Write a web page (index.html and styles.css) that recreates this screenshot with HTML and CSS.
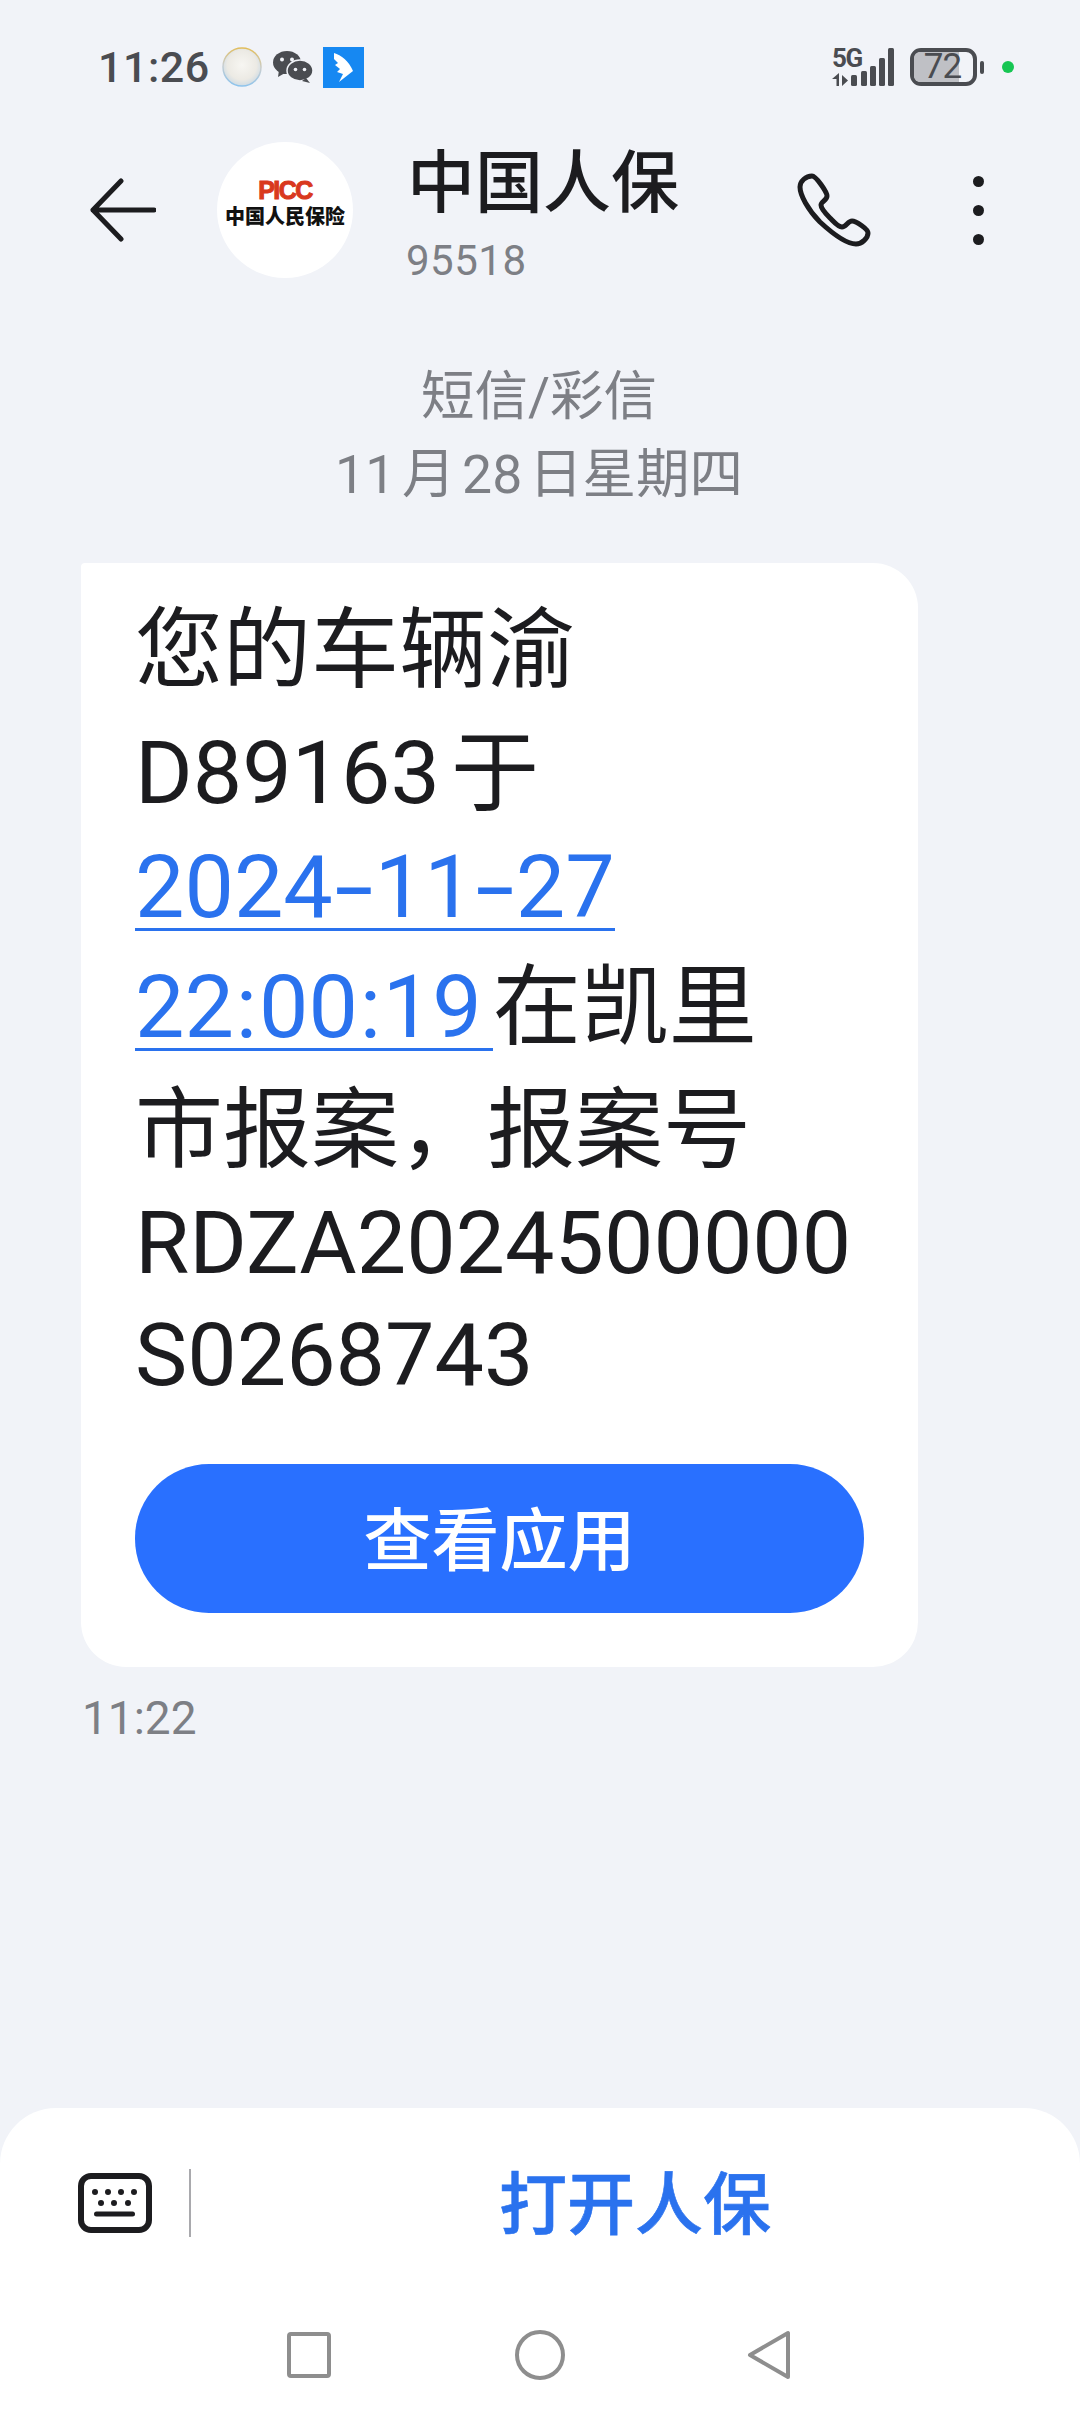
FILE: index.html
```html
<!DOCTYPE html>
<html lang="zh-CN">
<head>
<meta charset="utf-8">
<title>中国人保</title>
<link rel="stylesheet" href="styles.css">
</head>
<body>
<div class="screen">
  <div class="status">
    <span class="clock">11:26</span>
    <svg class="ic-weather" viewBox="0 0 42 42"><defs><radialGradient id="moon" cx="50%" cy="45%" r="55%"><stop offset="0" stop-color="#f7f6f2"/><stop offset=".7" stop-color="#eceae4"/><stop offset="1" stop-color="#cfdbe4"/></radialGradient><linearGradient id="rim" x1="0.6" y1="0" x2="0.5" y2="1"><stop offset="0" stop-color="#e2bd5a"/><stop offset=".5" stop-color="#c9ced0"/><stop offset="1" stop-color="#8dc3ec"/></linearGradient></defs><circle cx="21" cy="21" r="19" fill="url(#moon)" stroke="url(#rim)" stroke-width="1.5"/></svg>
    <svg class="ic-wechat" viewBox="0 0 40 32" fill="#4a4c51"><ellipse cx="14" cy="11.500" rx="14" ry="11.500"/><path d="M6 19l-1 7 7-4z"/><ellipse cx="27" cy="19.500" rx="13" ry="10.500" stroke="#f1f3f8" stroke-width="1.500"/><path d="M33 27l4 5-8-2z"/><circle cx="9" cy="8.500" r="2" fill="#f1f3f8"/><circle cx="19" cy="8.500" r="2" fill="#f1f3f8"/><circle cx="22.500" cy="18.500" r="1.800" fill="#f1f3f8"/><circle cx="31.500" cy="18.500" r="1.800" fill="#f1f3f8"/></svg>
    <svg class="ic-app" viewBox="0 0 41 41"><rect width="41" height="41" fill="#1688f2"/><path d="M11 6C18 8 26 14 30 24L16 35l4-8-6-2 3-3-5-4 3-2-4-4z" fill="#fff"/></svg>
    <span class="status-gap"></span>
    <svg class="ic-signal" viewBox="0 0 62 38" fill="#4a4c51"><rect x="19" y="27" width="6" height="11" rx="1.500"/><rect x="29" y="23" width="6" height="15" rx="1.500"/><rect x="38" y="18" width="6" height="20" rx="1.500"/><rect x="47" y="10" width="6" height="28" rx="1.500"/><rect x="56" y="0" width="6" height="38" rx="1.500"/><path d="M7 25v13H4.500v-7H0zM10 27l6 5.500-6 5.500z"/></svg>
    <span class="net">5G</span>
    <div class="battery"><div class="battery-fill"></div><span class="battery-num">72</span></div>
    <span class="battery-cap"></span>
    <span class="dot-green"></span>
  </div>

  <header class="header">
    <svg class="ic-back" viewBox="0 0 66 64" fill="none" stroke="#1c1c1f" stroke-width="5" stroke-linecap="round" stroke-linejoin="round"><path d="M31 3L3 32l28 29M3 32h61"/></svg>
    <div class="avatar">
      <span class="avatar-mark">PICC</span>
      <span class="avatar-name">中国人民保险</span>
    </div>
    <div class="contact">
      <div class="contact-name">中国人保</div>
      <div class="contact-num">95518</div>
    </div>
    <svg class="ic-phone" viewBox="0 0 74 74" fill="none" stroke="#1c1c1f" stroke-width="5" stroke-linejoin="round"><path d="M15 3c-6 0-12 5-12 11 0 8 8 23 20 35 13 12 26 22 36 22 6 0 12-6 12-11 0-4-12-12-16-12-4 0-6 6-10 6-4 0-8-5-12-9s-9-9-9-13c0-3 6-5 6-9S19 3 15 3z"/></svg>
    <div class="more"><span></span><span></span><span></span></div>
  </header>

  <main class="thread">
    <div class="thread-kind">短信/彩信</div>
    <div class="thread-date">11月28日星期四</div>
    <article class="bubble">
      <p class="msg">
        <span class="ln">您的车辆渝</span>
        <span class="ln">D89163于</span>
        <span class="ln"><a class="link">2024<span class="hy">-</span>11<span class="hy">-</span>27</a></span>
        <span class="ln"><a class="link">22<span class="cl">:</span>00<span class="cl">:</span>19</a>在凯里</span>
        <span class="ln">市报案，报案号</span>
        <span class="ln">RDZA2024500000</span>
        <span class="ln">S0268743</span>
      </p>
      <button class="cta">查看应用</button>
    </article>
    <div class="stamp">11:22</div>
  </main>

  <footer class="dock">
    <div class="dock-row">
      <svg class="ic-kbd" viewBox="0 0 74 60"><rect x="3" y="3" width="68" height="54" rx="10" fill="#fff" stroke="#1c1c1f" stroke-width="6"/><g fill="#1c1c1f"><circle cx="17" cy="19" r="3"/><circle cx="30" cy="19" r="3"/><circle cx="43" cy="19" r="3"/><circle cx="56" cy="19" r="3"/><circle cx="23" cy="30" r="3"/><circle cx="36" cy="30" r="3"/><circle cx="50" cy="30" r="3"/><rect x="16" y="38.500" width="41" height="5" rx="2.500"/></g></svg>
      <span class="dock-rule"></span>
      <span class="dock-open">打开人保</span>
    </div>
    <nav class="nav">
      <svg class="nav-sq" viewBox="0 0 44 46" fill="none" stroke="#8e8e8e" stroke-width="4"><rect x="2" y="2" width="40" height="42" rx="2"/></svg>
      <svg class="nav-ci" viewBox="0 0 50 50" fill="none" stroke="#8e8e8e" stroke-width="4"><circle cx="25" cy="25" r="23"/></svg>
      <svg class="nav-tr" viewBox="0 0 44 50" fill="none" stroke="#8e8e8e" stroke-width="4" stroke-linejoin="round"><path d="M41 3v44L3 25z"/></svg>
    </nav>
  </footer>
</div>
</body>
</html>
```
FILE: styles.css
```css
* { box-sizing: border-box; }
html, body { margin: 0; padding: 0; }
body { font-family: Roboto, "Noto Sans CJK SC", sans-serif; color: #1c1c1f; }

.screen {
  width: 1080px;
  height: 2412px;
  overflow: hidden;
  display: flex;
  flex-direction: column;
  background: #f1f3f8;
}

/* status bar */
.status {
  height: 134px;
  flex: none;
  display: flex;
  align-items: center;
  padding-left: 98px;
  position: relative;
}
.clock { font-size: 43px; font-weight: 500; color: #4a4c51; letter-spacing: .5px; width: 123px; }
.ic-weather { width: 42px; height: 42px; margin-right: 10px; }
.ic-wechat { width: 40px; height: 32px; margin-right: 10px; }
.ic-app { width: 41px; height: 41px; }
.status-gap { flex: 1; }
.ic-signal { width: 62px; height: 38px; margin-right: 16px; }
.net {
  position: absolute;
  left: 832px;
  top: 47px;
  font-size: 26px;
  line-height: 22px;
  font-weight: 700;
  color: #4a4c51;
  letter-spacing: -1.500px;
}
.battery {
  width: 67px;
  height: 38px;
  border: 4px solid #4a4c51;
  border-radius: 11px;
  position: relative;
}
.battery-fill { position: absolute; left: 0; top: 0; bottom: 0; width: 76%; background: #bfc0c5; border-radius: 6px 0 0 6px; }
.battery-num {
  position: relative;
  display: block;
  text-align: center;
  font-size: 35px;
  line-height: 30px;
  color: #4a4c51;
  letter-spacing: -1px;
  margin-left: -2px;
}
.battery-cap { width: 4px; height: 13px; background: #4a4c51; border-radius: 2px; margin-left: 3px; }
.dot-green { width: 12px; height: 12px; border-radius: 50%; background: #17c653; margin-left: 18px; margin-right: 66px; }

/* conversation header */
.header {
  height: 152px;
  flex: none;
  display: flex;
  align-items: center;
  padding-left: 90px;
}
.ic-back { width: 66px; height: 64px; }
.avatar {
  width: 136px;
  height: 136px;
  margin-left: 61px;
  border-radius: 50%;
  background: #fff;
  display: flex;
  flex-direction: column;
  align-items: center;
  padding-top: 35px;
}
.avatar-mark {
  font-family: "Liberation Sans", sans-serif;
  font-size: 25px;
  line-height: 27px;
  font-weight: 700;
  letter-spacing: -1.500px;
  color: #d9381e;
  -webkit-text-stroke: 1px #d9381e;
}
.avatar-name { font-size: 20px; line-height: 22px; font-weight: 900; color: #111; margin-top: 2px; white-space: nowrap; }
.contact { align-self: flex-start; margin: 8px 0 0 54px; width: 390px; }
.contact-name { font-size: 68px; line-height: 84px; font-weight: 500; color: #1c1c1f; }
.contact-num { font-size: 42px; line-height: 50px; color: #7d7f85; margin-top: 10px; margin-left: -1px; letter-spacing: .5px; }
.ic-phone { width: 74px; height: 74px; }
.more { display: flex; flex-direction: column; gap: 18px; margin-left: 102px; }
.more span { width: 11px; height: 11px; border-radius: 50%; background: #1c1c1f; }

/* message thread */
.thread { flex: 1; padding: 72px 0 0 81px; display: flex; flex-direction: column; align-items: flex-start; }
.thread-kind, .thread-date { width: 916px; text-align: center; color: #7d7f85; font-size: 53.500px; line-height: 78px; }
.thread-date { text-autospace: normal; }
.bubble {
  width: 837px;
  height: 1104px;
  margin-top: 49px;
  padding: 31px 54px 0;
  background: #fff;
  border-radius: 4px 45px 45px 45px;
}
.msg { margin: 0; font-size: 88px; color: #1c1c1f; text-autospace: normal; }

/* message lines sit on an uneven pitch: those holding CJK glyphs run taller */
.ln { display: block; white-space: nowrap; height: 112px; line-height: 112px; }
.ln:nth-child(2) { margin-top: 11px; }
.ln:nth-child(3) { margin-top: 2px; }
.ln:nth-child(4) { margin-top: 8px; }
.ln:nth-child(5) { margin-top: 11px; }
.ln:nth-child(6) { margin-top: 1px; }

.link {
  color: #2a72ee;
  background: linear-gradient(currentColor, currentColor) 0 93px / 100% 3px no-repeat;
}
.hy { display: inline-block; width: 42px; text-align: center; transform: scaleX(1.6); }
.cl { display: inline-block; width: 25px; text-align: center; }

.cta {
  display: block;
  width: 729px;
  height: 149px;
  margin-top: 53px;
  padding: 0 0 6px;
  border: 0;
  border-radius: 74px;
  background: #2970ff;
  color: #fff;
  font-family: inherit;
  font-size: 68px;
  font-weight: 500;
}
.stamp { font-size: 46px; line-height: 50px; color: #7d7f85; margin-top: 26px; margin-left: 1px; }

/* reply dock */
.dock { flex: none; height: 304px; background: #fff; border-radius: 56px 56px 0 0; }
.dock-row { height: 190px; display: flex; align-items: center; padding-left: 78px; }
.ic-kbd { width: 74px; height: 60px; }
.dock-rule { width: 2px; height: 68px; background: #a9a9ad; margin-left: 37px; }
.dock-open { margin: 6px 0 0 308px; font-size: 68px; font-weight: 500; color: #2a72ee; line-height: 80px; -webkit-text-stroke: .6px #2a72ee; }
.nav { display: flex; align-items: center; height: 60px; padding-left: 287px; margin-top: 27px; }
.nav-sq { width: 44px; height: 46px; }
.nav-ci { width: 50px; height: 50px; margin-left: 184px; }
.nav-tr { width: 44px; height: 50px; margin-left: 182px; }
```
